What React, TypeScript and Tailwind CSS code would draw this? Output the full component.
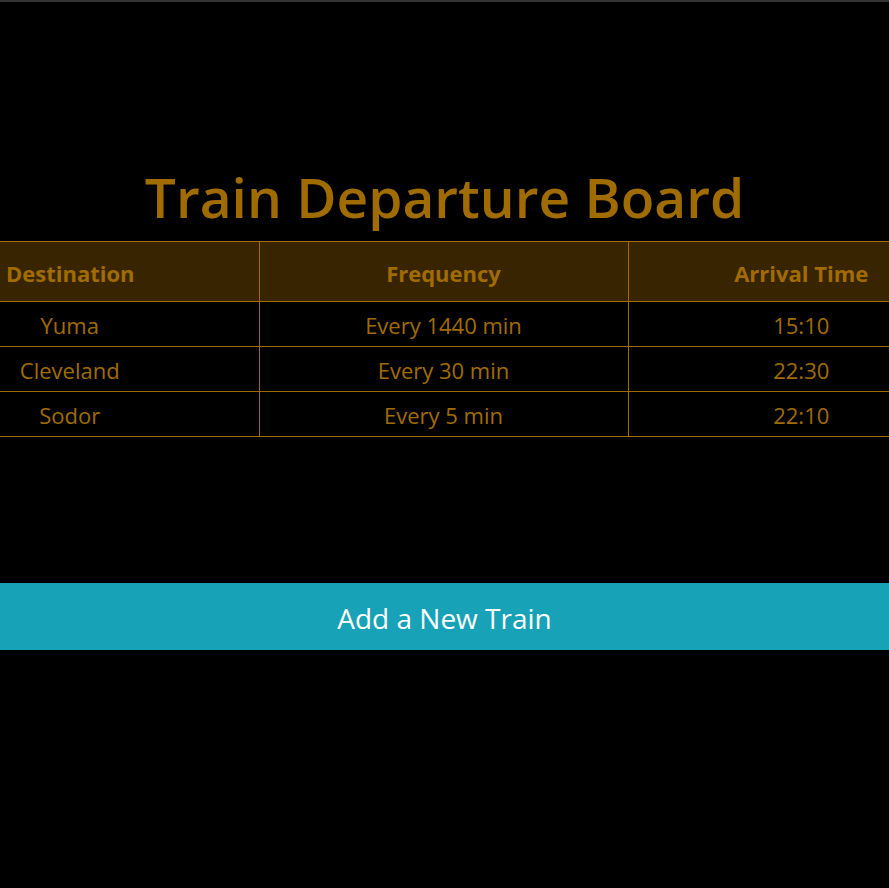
const trains = [
  { destination: 'Yuma', frequency: 'Every 1440 min', arrival: '15:10' },
  { destination: 'Cleveland', frequency: 'Every 30 min', arrival: '22:30' },
  { destination: 'Sodor', frequency: 'Every 5 min', arrival: '22:10' },
];

const App = () => {
  return (
    <div
      className="min-h-[888px] bg-black text-[#a06c00] overflow-hidden"
      style={{ fontFamily: '"Open Sans", "Noto Sans", sans-serif' }}
    >
      <div className="h-[2px] bg-[#333333]" />

      <h1 className="mt-[150px] text-center text-[55px] leading-[89px] font-semibold text-[#a06c00]">
        Train Departure Board
      </h1>

      <table className="w-[889px] border-collapse table-fixed">
        <thead>
          <tr className="h-[60px] bg-[#382500] border-y border-[#a06c00]">
            <th className="w-[259px] pl-[6px] pt-[3px] text-left text-[22px] font-bold">Destination</th>
            <th className="w-[369px] pt-[3px] border-x border-[#a06c00] text-center text-[22px] font-bold">
              Frequency
            </th>
            <th className="w-[261px] pl-[85px] pt-[3px] text-center text-[22px] font-bold">Arrival Time</th>
          </tr>
        </thead>
        <tbody>
          {trains.map((train, index) => (
            <tr key={index} className="h-[45px] border-b border-[#a06c00]">
              <td className="pr-[119px] pt-[3px] text-center text-[22px]">{train.destination}</td>
              <td className="pt-[3px] border-x border-[#a06c00] text-center text-[22px]">{train.frequency}</td>
              <td className="pl-[85px] pt-[3px] text-center text-[22px]">{train.arrival}</td>
            </tr>
          ))}
        </tbody>
      </table>

      <button className="mt-[146px] block w-full h-[67px] bg-[#17a2b8] text-white text-[28px] font-normal pt-[2px]">
        Add a New Train
      </button>
    </div>
  );
};

export default App;
